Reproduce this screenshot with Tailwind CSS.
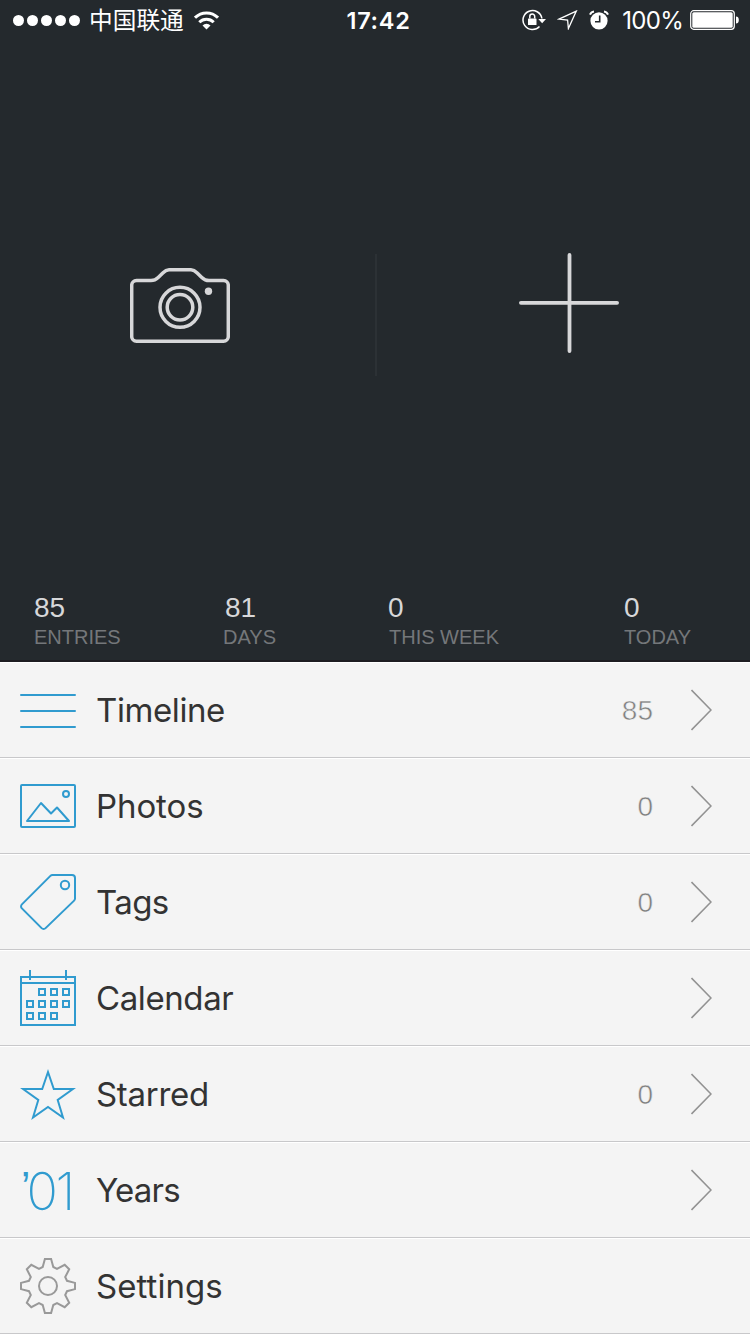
<!DOCTYPE html>
<html lang="en">
<head>
<meta charset="utf-8">
<meta name="viewport" content="width=device-width">
<title>Journal</title>
<script src="https://cdn.jsdelivr.net/npm/@tailwindcss/browser@4"></script>
</head>
<body class="w-[750px] h-[1334px] overflow-hidden bg-[#f4f4f4] font-['Inter','Noto_Sans_CJK_SC',sans-serif]">
<div class="flex h-[1334px] flex-col">
  <section class="flex h-[662px] shrink-0 flex-col border-b-2 border-[#1d1c21] bg-[#24292d]">
    <header class="grid h-10 grid-cols-3 items-center text-white">
      <div class="flex items-center pl-[13px]">
        <svg class="shrink-0" width="68" height="12" fill="#fff"><circle cx="5.500" cy="6.500" r="5.500"/><circle cx="19.500" cy="6.500" r="5.500"/><circle cx="33.500" cy="6.500" r="5.500"/><circle cx="47.500" cy="6.500" r="5.500"/><circle cx="61.500" cy="6.500" r="5.500"/></svg>
        <span class="ml-2 pb-0.5 font-['Noto_Sans_CJK_SC',sans-serif] text-[23.700px] leading-[38px] font-normal whitespace-nowrap">中国联通</span>
        <svg class="ml-[10px] shrink-0" width="25" height="19" viewBox="0 0 25 19" fill="none" stroke="#fff" stroke-width="3"><path d="M1 6.700a16.300 16.300 0 0 1 23 0"/><path d="M5.300 11.200a10.200 10.200 0 0 1 14.400 0"/><path d="M12.500 18.500l-4-4a5.700 5.700 0 0 1 8 0z" fill="#fff" stroke="none"/></svg>
      </div>
      <div class="pt-0.5 pl-[7px] text-center text-[23.500px] leading-[38px] font-semibold tracking-[0.700px]">17:42</div>
      <div class="flex items-center justify-end pr-[11px]">
        <svg class="shrink-0" width="24" height="22" viewBox="0 0 24 22" fill="none" stroke="#fff" stroke-width="1.500"><path d="M17.500 17.500A9.500 9.500 0 1 1 19.900 9.500"/><path d="M16.300 10h7.700l-3.850 4.300z" fill="#fff" stroke="none"/><rect x="6" y="9.500" width="8.500" height="6.500" rx=".6" fill="#fff" stroke="none"/><path d="M7.800 9.500v-2a2.450 2.450 0 0 1 4.900 0v2"/></svg>
        <svg class="ml-[11px] shrink-0" width="21" height="20" viewBox="0 0 21 20" fill="none" stroke="#fff" stroke-width="1.300"><path d="M19.300 1.100L2 9.100l8.600.9.800 8.500z" stroke-linejoin="miter"/></svg>
        <svg class="ml-[11px] shrink-0" width="20" height="20" viewBox="0 0 20 20"><circle cx="10" cy="10.800" r="8.600" fill="#fff"/><path d="M1 4.700A5 5 0 0 1 5 1.400M19 4.700a5 5 0 0 0-4-3.300" fill="none" stroke="#fff" stroke-width="2"/><path d="M10.700 5.500v6.200H6" fill="none" stroke="#24292d" stroke-width="1.600"/></svg>
        <span class="ml-[13px] pt-0.5 text-[24px] leading-[38px] font-normal tracking-[-0.700px]">100%</span>
        <svg class="ml-[7px] shrink-0" width="49" height="20" viewBox="0 0 49 20"><rect x=".7" y=".7" width="43.600" height="18.600" rx="3" fill="none" stroke="#fff" stroke-width="1.200"/><rect x="2.300" y="2.300" width="40.400" height="15.400" rx="1.500" fill="#fff"/><path d="M46 6.500c1.800 0 2.800 1 2.800 3.500s-1 3.500-2.800 3.500z" fill="#fff"/></svg>
      </div>
    </header>

    <div class="grid h-[540px] grid-cols-2">
      <div class="pt-[228px] pl-[130px]">
        <svg width="100" height="75" viewBox="0 0 100 75" fill="none" stroke="#d7d7d9" stroke-width="3.500"><path d="M6.500 12.500H21c3 0 5-1 7.200-3.100l4.600-4.500C35 2.700 36.500 1.800 39 1.800h22c2.500 0 4 .9 6.200 3.100l4.600 4.500c2.200 2.100 4.200 3.100 7.200 3.100h14.500a4.800 4.800 0 0 1 4.800 4.800v51.100a4.800 4.800 0 0 1-4.800 4.800h-87a4.800 4.800 0 0 1-4.800-4.800V17.300a4.800 4.800 0 0 1 4.800-4.800z"/><circle cx="50" cy="39.300" r="20"/><circle cx="50" cy="39.300" r="12.800"/><circle cx="78.500" cy="23.200" r="3.700" fill="#d7d7d9" stroke="none"/></svg>
      </div>
      <div class="flex items-start pt-[213px]">
        <div class="mt-px h-[122px] w-0.5 bg-[#2c3135]"></div>
        <svg class="ml-[142px]" width="100" height="100" viewBox="0 0 100 100" stroke="#d7d7d9" stroke-width="3.800" stroke-linecap="round"><path d="M1.900 49.800h96.200M50.500 1.900v96.200"/></svg>
      </div>
    </div>

    <dl class="grid grid-cols-[189px_165px_236px_1fr] pt-[12px] pl-[34px] font-['Liberation_Sans',Arial,sans-serif]">
      <div><dd class="text-[28px] leading-8 text-[#d7d7d9]">85</dd><dt class="mt-px text-[20px] leading-6 text-[#74777a]">ENTRIES</dt></div>
      <div><dd class="pl-[2px] text-[28px] leading-8 text-[#d7d7d9]">81</dd><dt class="mt-px text-[20px] leading-6 text-[#74777a]">DAYS</dt></div>
      <div><dd class="text-[28px] leading-8 text-[#d7d7d9]">0</dd><dt class="mt-px pl-px text-[20px] leading-6 text-[#74777a]">THIS WEEK</dt></div>
      <div><dd class="text-[28px] leading-8 text-[#d7d7d9]">0</dd><dt class="mt-px text-[20px] leading-6 text-[#74777a]">TODAY</dt></div>
    </dl>
  </section>

  <nav class="text-[33px] text-[#333]">
    <a class="flex h-24 items-center border-t border-b border-t-white border-b-[#c8c8ca] pr-[38px] pl-5">
      <svg class="shrink-0" width="56" height="56" viewBox="0 0 56 56" stroke="#309bcf" stroke-width="2" stroke-linecap="round"><path d="M1 13h54M1 29h54M1 45h54"/></svg>
      <span class="ml-5 flex-1 pt-0.5 tracking-[-0.400px]">Timeline</span>
      <span class="mr-[38px] pt-0.5 font-['Liberation_Sans',Arial,sans-serif] text-[28px] text-[#808080] [-webkit-text-stroke:0.500px_#f4f4f4]">85</span>
      <svg class="shrink-0" width="21" height="42" viewBox="0 0 21 42" fill="none" stroke="#929292" stroke-width="1.600"><path d="M.5 1L20 21 .5 41"/></svg>
    </a>
    <a class="flex h-24 items-center border-t border-b border-t-white border-b-[#c8c8ca] pr-[38px] pl-5">
      <svg class="shrink-0" width="56" height="56" viewBox="0 0 56 56" fill="none" stroke="#309bcf" stroke-width="2"><rect x="1" y="7" width="54" height="42" rx="1"/><path d="M7 43L21 25l10 10.500 6-6L49 43z" stroke-linejoin="round"/><circle cx="46" cy="16" r="3"/></svg>
      <span class="ml-5 flex-1 pt-0.5 tracking-[-0.100px]">Photos</span>
      <span class="mr-[38px] pt-0.5 font-['Liberation_Sans',Arial,sans-serif] text-[28px] text-[#808080] [-webkit-text-stroke:0.500px_#f4f4f4]">0</span>
      <svg class="shrink-0" width="21" height="42" viewBox="0 0 21 42" fill="none" stroke="#929292" stroke-width="1.600"><path d="M.5 1L20 21 .5 41"/></svg>
    </a>
    <a class="flex h-24 items-center border-t border-b border-t-white border-b-[#c8c8ca] pr-[38px] pl-5">
      <svg class="shrink-0" width="56" height="56" viewBox="0 0 56 56" fill="none" stroke="#309bcf" stroke-width="2"><path d="M32.500 1H52a3 3 0 0 1 3 3v20.500a3 3 0 0 1-.9 2.100L25.600 54.100a2.800 2.800 0 0 1-4 0L1.900 34.400a2.800 2.800 0 0 1 0-4L30.400 1.900a3 3 0 0 1 2.100-.9z"/><circle cx="45" cy="11" r="4.200"/></svg>
      <span class="ml-5 flex-1 pt-0.5 tracking-[-0.600px]">Tags</span>
      <span class="mr-[38px] pt-0.5 font-['Liberation_Sans',Arial,sans-serif] text-[28px] text-[#808080] [-webkit-text-stroke:0.500px_#f4f4f4]">0</span>
      <svg class="shrink-0" width="21" height="42" viewBox="0 0 21 42" fill="none" stroke="#929292" stroke-width="1.600"><path d="M.5 1L20 21 .5 41"/></svg>
    </a>
    <a class="flex h-24 items-center border-t border-b border-t-white border-b-[#c8c8ca] pr-[38px] pl-5">
      <svg class="shrink-0" width="56" height="56" viewBox="0 0 56 56" fill="none" stroke="#309bcf" stroke-width="2"><path d="M1 7h54v48H1zM1 13h54M10 0v10M46 0v10"/><path d="M19 19h6v6h-6zM31 19h6v6h-6zM43 19h6v6h-6zM7 31h6v6H7zM19 31h6v6h-6zM31 31h6v6h-6zM43 31h6v6h-6zM7 43h6v6H7zM19 43h6v6h-6zM31 43h6v6h-6z"/></svg>
      <span class="ml-5 flex-1 pt-0.5 tracking-[-0.400px]">Calendar</span>
      <svg class="shrink-0" width="21" height="42" viewBox="0 0 21 42" fill="none" stroke="#929292" stroke-width="1.600"><path d="M.5 1L20 21 .5 41"/></svg>
    </a>
    <a class="flex h-24 items-center border-t border-b border-t-white border-b-[#c8c8ca] pr-[38px] pl-5">
      <svg class="shrink-0" width="56" height="56" viewBox="0 0 56 56" fill="none" stroke="#309bcf" stroke-width="2"><path d="M28 6l5.800 17H53L37.700 34 43 51.500 28 41 13 51.500 18.300 34 3 23h19.200z"/></svg>
      <span class="ml-5 flex-1 pt-0.5 tracking-[-0.300px]">Starred</span>
      <span class="mr-[38px] pt-0.5 font-['Liberation_Sans',Arial,sans-serif] text-[28px] text-[#808080] [-webkit-text-stroke:0.500px_#f4f4f4]">0</span>
      <svg class="shrink-0" width="21" height="42" viewBox="0 0 21 42" fill="none" stroke="#929292" stroke-width="1.600"><path d="M.5 1L20 21 .5 41"/></svg>
    </a>
    <a class="flex h-24 items-center border-t border-b border-t-white border-b-[#c8c8ca] pr-[38px] pl-5">
      <svg class="shrink-0 overflow-visible" width="56" height="56" viewBox="0 0 56 56" fill="#309bcf"><text class="font-['Inter',sans-serif] text-[52px] font-extralight"><tspan class="font-['Liberation_Sans',sans-serif] text-[42px]" x="1" y="39">’</tspan><tspan x="6.500 35.500" y="47.500">01</tspan></text></svg>
      <span class="ml-5 flex-1 pt-0.5 tracking-[-0.800px]">Years</span>
      <svg class="shrink-0" width="21" height="42" viewBox="0 0 21 42" fill="none" stroke="#929292" stroke-width="1.600"><path d="M.5 1L20 21 .5 41"/></svg>
    </a>
    <a class="flex h-24 items-center border-t border-b border-t-white border-b-[#c8c8ca] pr-[38px] pl-5">
      <svg class="shrink-0" width="56" height="56" viewBox="0 0 56 56" fill="none" stroke="#999" stroke-width="2"><path d="M24.900 1h6.200l2.200 8 3.700 1.800 7.700-4 4.500 4.500-4 7.700 1.800 3.800 8 2.100v6.200l-8 2.100-1.800 3.800 4 7.700-4.500 4.500-7.700-4-3.700 1.800-2.200 8h-6.200l-2.200-8-3.700-1.800-7.700 4-4.500-4.500 4-7.700L9 33.200l-8-2.100v-6.200l8-2.100 1.800-3.800-4-7.700 4.500-4.500 7.700 4L22.700 9z"/><circle cx="28" cy="28" r="9"/></svg>
      <span class="ml-5 flex-1 pt-0.5 tracking-[0.050px]">Settings</span>
    </a>
  </nav>
</div>
</body>
</html>
